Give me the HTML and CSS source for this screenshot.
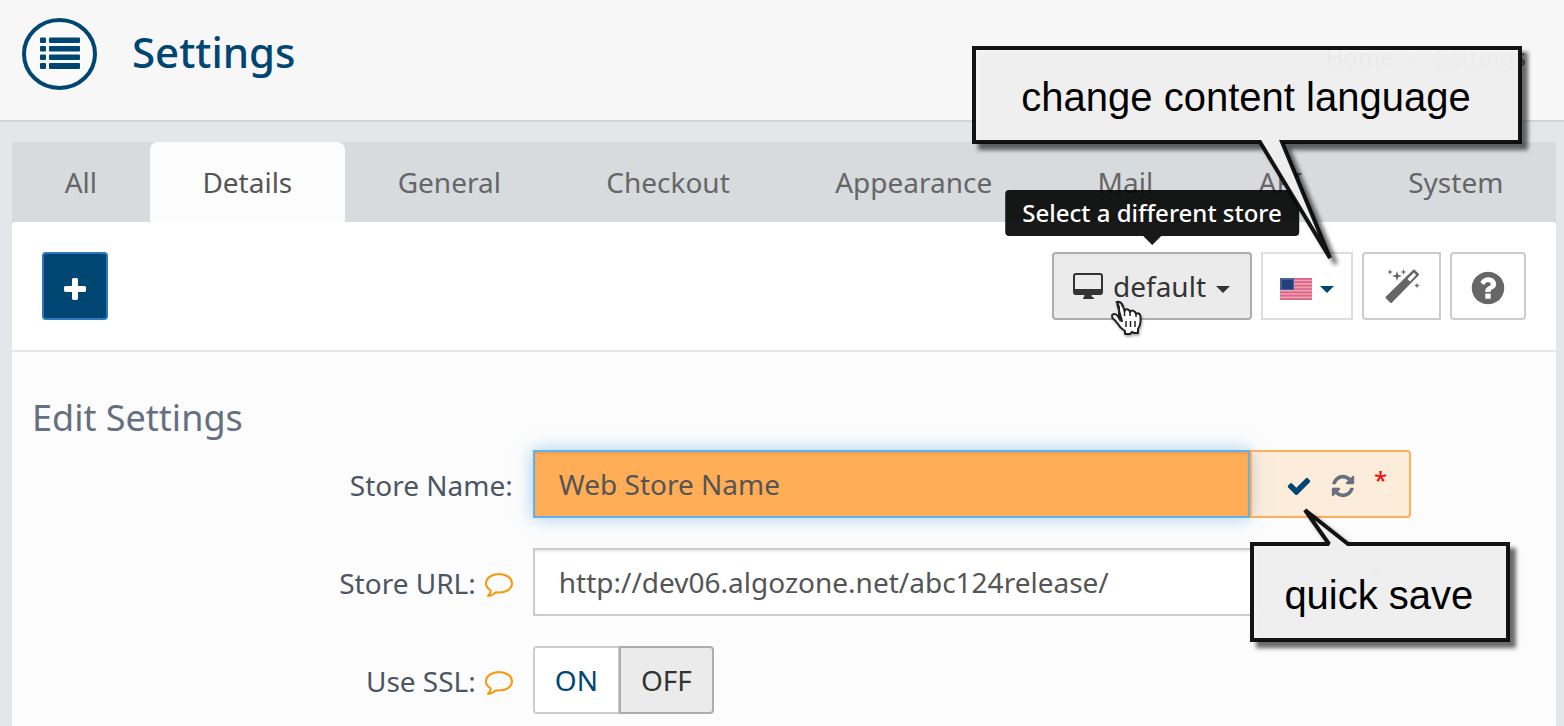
FILE: index.html
```html
<!DOCTYPE html>
<html lang="en">
<head>
<meta charset="utf-8">
<title>Settings</title>
<link rel="stylesheet" href="styles.css">
</head>
<body>
<header class="header">
  <svg class="header-icon" width="76" height="72" viewBox="0 0 76 72" aria-hidden="true">
    <ellipse cx="37.5" cy="36" rx="35.5" ry="34" fill="#fafafa" stroke="#004672" stroke-width="4"/>
    <g fill="#004672">
      <rect x="18" y="19.500" width="6" height="5.500" rx="1"/><rect x="27" y="19.500" width="31" height="5.500" rx="1"/>
      <rect x="18" y="28" width="6" height="5.500" rx="1"/><rect x="27" y="28" width="31" height="5.500" rx="1"/>
      <rect x="18" y="36.500" width="6" height="5.500" rx="1"/><rect x="27" y="36.500" width="31" height="5.500" rx="1"/>
      <rect x="18" y="45" width="6" height="6" rx="1"/><rect x="27" y="45" width="31" height="6" rx="1"/>
    </g>
  </svg>
  <h1 class="title">Settings</h1>
  <nav class="breadcrumb" aria-label="Breadcrumb"><a href="#">Home</a><span class="slash">/</span><span>Settings</span></nav>
</header>

<main class="content">
  <nav class="tabs" aria-label="Settings sections">
    <a class="tab" href="#">All</a>
    <a class="tab tab-active" href="#" aria-current="page">Details</a>
    <a class="tab" href="#">General</a>
    <a class="tab" href="#">Checkout</a>
    <a class="tab" href="#">Appearance</a>
    <a class="tab" href="#">Mail</a>
    <a class="tab" href="#">API</a>
    <a class="tab" href="#">System</a>
  </nav>

  <div class="toolbar">
    <button class="btn btn-add" type="button" aria-label="Add">
      <svg width="28" height="28" viewBox="0 0 1792 1792"><path fill="#fff" d="M1600 736v192q0 40-28 68t-68 28h-416v416q0 40-28 68t-68 28h-192q-40 0-68-28t-28-68v-416h-416q-40 0-68-28t-28-68v-192q0-40 28-68t68-28h416v-416q0-40 28-68t68-28h192q40 0 68 28t28 68v416h416q40 0 68 28t28 68z"/></svg>
    </button>
    <div class="tools">
      <div class="tool">
        <button class="btn btn-store" type="button" aria-describedby="store-tip">
          <svg width="30" height="26" viewBox="0 0 30 26"><rect x="1" y="1" width="28" height="20" rx="2" fill="none" stroke="#333" stroke-width="2"/><path fill="#333" d="M1 16h28v4q0 2-2 2H3q-2 0-2-2zM11.500 22h7l.5 2h1q1 .5 1 2H10q0-1.500 1-2z"/></svg>
          <span>default</span>
          <svg class="caret" width="14" height="7" viewBox="0 0 14 7"><path fill="#333" d="M0 0h14L7 7z"/></svg>
        </button>
        <div class="tooltip" id="store-tip" role="tooltip">Select a different store</div>
        <svg class="cursor" width="34" height="38" viewBox="0 0 34 38" aria-hidden="true">
          <path fill="#fff" stroke="#222" stroke-width="2" stroke-linejoin="round" d="M9 18V7Q8 3 6.500 2Q11 1 13 6L14.500 11Q16 8 19 10L20 12Q22 9 25 12L26 14Q29 12 30.500 16V22Q30 26 28 29V33H24L22 32 20 34H15V31Q10 28 8 24Q5 20 2.500 18Q1 14 4.500 14Q7 14 10 20L12 21L8 7Q6.500 3 9 2Q11 2 13 7"/>
          <path fill="none" stroke="#222" stroke-width="1.500" d="M14.500 11v5M20 12v4M26 14v3M16 21v6M20.500 21v6M25 21v6"/>
        </svg>
      </div>
      <div class="tool">
        <button class="btn btn-lang" type="button" aria-label="Content language: English (US)">
          <svg width="32" height="22" viewBox="0 0 32 22"><rect width="32" height="22" fill="#f09fb4"/><path stroke="#d96686" stroke-width="1.700" d="M0 .9h32M0 4.200h32M0 7.600h32M0 11h32M0 14.300h32M0 17.700h32M0 21.100h32"/><rect width="14" height="12" fill="#48629a"/><rect x="2" y="2" width="11" height="9" fill="#24407c"/></svg>
          <svg width="14" height="7" viewBox="0 0 14 7"><path fill="#004672" d="M0 0h14L7 7z"/></svg>
        </button>
        <div class="callout callout-lang">
          <svg width="560" height="224" viewBox="0 0 560 224" aria-hidden="true"><path fill="#f6f6f6" fill-opacity=".95" stroke="#080808" stroke-opacity=".95" stroke-width="4" stroke-linejoin="miter" stroke-miterlimit="2" d="M2 2H548V96H310L358 212 288 96H2Z"/></svg>
          <span class="callout-text">change content language</span>
        </div>
      </div>
      <button class="btn btn-wand" type="button" aria-label="Wizard">
        <svg width="36" height="36" viewBox="0 0 36 36"><path fill="#666" fill-rule="evenodd" d="M29 2q1-1 2 0l3.500 3.500q1 1 0 2L8 34.500q-1 1-2 0L2 30.500q-1-1 0-2zM30 4.500 23.500 11 26 13.500 32 7zM13 3l1.200 3.800L18 8l-3.800 1.200L13 13l-1.200-3.800L8 8l3.800-1.200zM6 1l.7 2.300L9 4l-2.300.7L6 7l-.7-2.300L3 4l2.300-.7zM19.500 1l.7 2.300 2.300.7-2.300.7-.7 2.300-.7-2.300-2.300-.7 2.300-.7zM33 14.500l.7 2.300 2.300.7-2.300.7-.7 2.300-.7-2.300-2.300-.7 2.300-.7z"/></svg>
      </button>
      <button class="btn btn-help" type="button" aria-label="Help">
        <svg width="38" height="38" viewBox="0 0 1792 1792"><path fill="#666" d="M1024 1376v-192q0-14-9-23t-23-9h-192q-14 0-23 9t-9 23v192q0 14 9 23t23 9h192q14 0 23-9t9-23zm256-672q0-88-55.500-163t-138.500-116-170-41q-243 0-371 213-15 24 8 42l132 100q7 6 19 6 16 0 25-12 53-68 86-92 34-24 86-24 48 0 85.500 26t37.500 59q0 38-20 61t-68 45q-63 28-115.500 86.500t-52.500 125.500v36q0 14 9 23t23 9h192q14 0 23-9t9-23q0-19 21.500-49.500t54.500-49.500q32-18 49-28.500t46-35 44.500-48 28-60.500 12.500-81zm384 192q0 209-103 385.500t-279.500 279.500-385.500 103-385.500-103-279.500-279.500-103-385.500 103-385.500 279.500-279.500 385.500-103 385.500 103 279.500 279.500 103 385.500z"/></svg>
      </button>
    </div>
  </div>

  <form class="form">
    <h2 class="form-title">Edit Settings</h2>

    <div class="row">
      <label class="label" for="store-name">Store Name:</label>
      <div class="group">
        <input class="input input-edit" id="store-name" type="text" value="Web Store Name">
        <div class="addon addon-edit">
          <button class="icon-btn" type="button" aria-label="Save"><svg width="26" height="26" viewBox="0 0 1792 1792"><path fill="#004672" d="M1671 566q0 40-28 68l-724 724-136 136q-28 28-68 28t-68-28l-136-136-362-362q-28-28-28-68t28-68l136-136q28-28 68-28t68 28l294 295 656-657q28-28 68-28t68 28l136 136q28 28 28 68z"/></svg></button>
          <button class="icon-btn" type="button" aria-label="Reset"><svg width="26" height="26" viewBox="0 0 1792 1792"><path fill="#66707f" d="M1639 1056q0 5-1 7-64 268-268 434.500t-478 166.500q-146 0-282.500-55t-243.500-157l-129 129q-19 19-45 19t-45-19-19-45v-448q0-26 19-45t45-19h448q26 0 45 19t19 45-19 45l-137 137q71 66 161 102t187 36q134 0 250-65t186-179q11-17 53-117 8-23 30-23h192q13 0 22.500 9.500t9.500 22.500zm25-800v448q0 26-19 45t-45 19h-448q-26 0-45-19t-19-45 19-45l138-138q-148-137-349-137-134 0-250 65t-186 179q-11 17-53 117-8 23-30 23h-199q-13 0-22.500-9.500t-9.500-22.500v-7q65-268 270-434.500t480-166.500q146 0 284 55.500t245 156.500l130-129q19-19 45-19t45 19 19 45z"/></svg></button>
          <span class="required">*</span>
          <div class="callout callout-save">
            <svg width="270" height="150" viewBox="0 0 270 150" aria-hidden="true"><path fill="#f6f6f6" fill-opacity=".95" stroke="#080808" stroke-opacity=".95" stroke-width="4" stroke-linejoin="miter" stroke-miterlimit="2" d="M2 40H79L55 6 98 40H258V136H2Z"/></svg>
            <span class="callout-text">quick save</span>
          </div>
        </div>
      </div>
    </div>

    <div class="row">
      <label class="label" for="store-url">Store URL:
        <svg width="28" height="24" viewBox="0 0 28 24"><path fill="none" stroke="#f7980a" stroke-width="2" stroke-linejoin="round" d="M14 1C21 1 27 5 27 10.500S21 19.500 14 19.500Q12.500 19.500 11 19.200Q8 22.500 3 23Q5.500 20.500 5.800 17.500Q1 14.500 1 10.500C1 5 7 1 14 1Z"/></svg>
      </label>
      <div class="group">
        <input class="input" id="store-url" type="text" value="http://dev06.algozone.net/abc124release/">
        <div class="addon"><span class="required">*</span></div>
      </div>
    </div>

    <div class="row">
      <span class="label" id="ssl-label">Use SSL:
        <svg width="28" height="24" viewBox="0 0 28 24"><path fill="none" stroke="#f7980a" stroke-width="2" stroke-linejoin="round" d="M14 1C21 1 27 5 27 10.500S21 19.500 14 19.500Q12.500 19.500 11 19.200Q8 22.500 3 23Q5.500 20.500 5.800 17.500Q1 14.500 1 10.500C1 5 7 1 14 1Z"/></svg>
      </span>
      <div class="switch" role="group" aria-labelledby="ssl-label">
        <button class="btn btn-on" type="button" aria-pressed="false">ON</button>
        <button class="btn btn-off" type="button" aria-pressed="true">OFF</button>
      </div>
    </div>
  </form>
</main>
</body>
</html>
```
FILE: styles.css
```css
* {
  box-sizing: border-box;
}

body {
  margin: 0;
  min-height: 100vh;
  display: flex;
  flex-direction: column;
  overflow-x: hidden;
  background: #e3e7ea;
  color: #4c5663;
  font: 28px/40px "Noto Sans", "Open Sans", sans-serif;
}

svg {
  display: block;
  flex: none;
}

.header {
  display: flex;
  align-items: flex-start;
  padding: 18px 38px 30px 22px;
  background: #f7f7f7;
  border-bottom: 2px solid #d1d5d9;
}

.title {
  margin: 6px 0 0 34px;
  color: #004672;
  font-size: 42px;
  font-weight: 500;
  line-height: 56px;
}

.breadcrumb {
  display: flex;
  gap: 16px;
  margin: 19px 0 0 auto;
  color: #777;
  font-size: 24px;
}

.breadcrumb a {
  color: #004672;
  text-decoration: none;
}

.slash {
  color: #ccc;
}

.content {
  flex: 1;
  display: flex;
  flex-direction: column;
  padding: 20px 8px 0 12px;
}

.tabs {
  display: flex;
  background: #d7dbde;
  border-radius: 4px 4px 0 0;
}

.tab {
  flex: 1 1 auto;
  padding: 20px 50px;
  color: #666;
  text-align: center;
  text-decoration: none;
  border-radius: 8px 8px 0 0;
}

.tab-active {
  background: #fcfcfc;
  color: #555;
}

.toolbar {
  display: flex;
  justify-content: space-between;
  padding: 30px;
  background: #fff;
  border-bottom: 2px solid #e6e6e6;
  border-radius: 4px 4px 0 0;
}

.tools {
  display: flex;
  gap: 9px;
}

.tool {
  position: relative;
}

.btn {
  display: flex;
  align-items: center;
  justify-content: center;
  height: 68px;
  padding: 0 20px;
  background: #fff;
  border: 2px solid #ccc;
  border-radius: 4px;
  color: #333;
  font: inherit;
}

.btn-add {
  width: 66px;
  padding: 8px 0 0;
  background: #004672;
  border-color: #2a78bd;
}

.btn-store {
  gap: 10px;
  padding: 0 20px 0 19px;
  background: #ebebeb;
  border-color: #adadad;
}

.caret {
  margin-top: 6px;
}

.btn-lang {
  gap: 8px;
  padding: 6px 17px 0;
  border-color: #ddd;
  border-radius: 0;
}

.btn-wand {
  width: 79px;
  border-radius: 4px 0 0 4px;
}

.btn-help {
  width: 76px;
  padding: 4px 0 0;
}

.tooltip {
  position: absolute;
  bottom: calc(100% + 16px);
  left: 50%;
  transform: translateX(-50%);
  padding: 3px 17px;
  background: rgba(0, 0, 0, 0.9);
  border-radius: 4px;
  color: #fff;
  font-size: 24px;
  font-weight: 500;
  white-space: nowrap;
}

.tooltip::after {
  content: "";
  position: absolute;
  top: 100%;
  left: 50%;
  margin-left: -9px;
  border: 9px solid transparent;
  border-bottom: 0;
  border-top-color: rgba(0, 0, 0, 0.9);
}

.cursor {
  position: absolute;
  top: 48px;
  left: 58px;
  filter: drop-shadow(1px 2px 1px rgba(0, 0, 0, 0.3));
}

.callout {
  position: absolute;
  z-index: 2;
  color: #000;
  font: 40px/48px "Liberation Sans", Arial, sans-serif;
  text-align: center;
  white-space: nowrap;
  pointer-events: none;
}

.callout svg {
  filter: drop-shadow(6px 6px 2px rgba(0, 0, 0, 0.6));
}

.callout-text {
  position: absolute;
  left: 0;
  right: 12px;
}

.callout-lang {
  top: -206px;
  right: -179px;
}

.callout-lang .callout-text {
  top: 27px;
}

.callout-save {
  top: 52px;
  right: -111px;
}

.callout-save .callout-text {
  top: 67px;
}

.form {
  flex: 1;
  padding-bottom: 12px;
  background: #fcfcfc;
}

.form-title {
  margin: 0;
  padding: 42px 20px 8px;
  color: #647080;
  font-size: 36px;
  font-weight: 400;
  line-height: 48px;
}

.row {
  display: grid;
  grid-template-columns: 35.8% 1fr;
  gap: 20px;
  align-items: center;
  margin-bottom: 30px;
  padding-right: 9.4%;
}

.row:last-child {
  margin-bottom: 0;
}

.label {
  display: flex;
  align-items: center;
  justify-content: flex-end;
  gap: 9px;
  padding-top: 2px;
}

.label svg {
  margin-top: 4px;
}

.group {
  display: flex;
}

.input {
  flex: 1;
  min-width: 0;
  height: 68px;
  padding: 0 24px;
  background: #fff;
  border: 2px solid #ccc;
  border-radius: 0;
  box-shadow: inset 0 2px 2px rgba(0, 0, 0, 0.08);
  color: #555;
  font: inherit;
}

.input-edit {
  background: #ffad56;
  border-color: #66afe9;
  box-shadow: inset 0 2px 2px rgba(0, 0, 0, 0.08), 0 0 16px rgba(102, 175, 233, 0.6);
}

.addon {
  display: flex;
  align-items: center;
  justify-content: center;
  width: 64px;
  border: 2px solid #eee;
  border-left: 0;
  border-radius: 0 4px 4px 0;
}

.addon-edit {
  position: relative;
  justify-content: flex-start;
  gap: 18px;
  width: 161px;
  padding: 4px 0 0 34px;
  background: rgba(255, 173, 86, 0.2);
  border: 2px solid #ffad56;
}

.icon-btn {
  padding: 0;
  background: none;
  border: 0;
}

.required {
  padding-bottom: 12px;
  color: #f00;
  font-size: 24px;
  line-height: 32px;
}

.switch {
  display: flex;
}

.btn-on {
  border-radius: 4px 0 0 4px;
  color: #004672;
}

.btn-off {
  margin-left: -1px;
  background: #ebebeb;
  border-color: #adadad;
  border-radius: 0 4px 4px 0;
}
```
